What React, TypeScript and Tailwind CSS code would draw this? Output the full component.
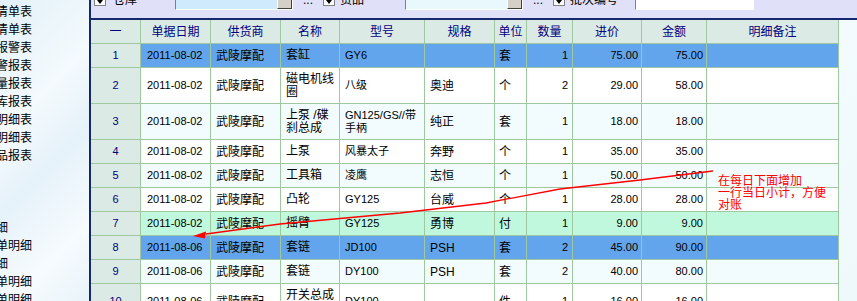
import clsx from "clsx";

const COLS =
  "grid grid-cols-[49px_69px_69px_58px_84px_69px_31px_45px_68px_64px_131px] gap-px";

type Tone = "sel" | "alt" | "white" | "green";

type Row = {
  no: number;
  date: string;
  sup: string;
  name: string[];
  model: string[];
  spec: string;
  unit: string;
  qty: string;
  price: string;
  amt: string;
  tone: Tone;
  mark?: boolean;
};

const toneBg: Record<Tone, string> = {
  sel: "bg-[#63a5ec]",
  alt: "bg-[#f2fcfe]",
  white: "bg-white",
  green: "bg-[#bff8dc]",
};

const rows: Row[] = [
  { no: 1, date: "2011-08-02", sup: "武陵摩配", name: ["套缸"], model: ["GY6"], spec: "", unit: "套", qty: "1", price: "75.00", amt: "75.00", tone: "sel" },
  { no: 2, date: "2011-08-02", sup: "武陵摩配", name: ["磁电机线", "圈"], model: ["八级"], spec: "奥迪", unit: "个", qty: "2", price: "29.00", amt: "58.00", tone: "white" },
  { no: 3, date: "2011-08-02", sup: "武陵摩配", name: ["上泵 /碟", "刹总成"], model: ["GN125/GS//带", "手柄"], spec: "纯正", unit: "套", qty: "1", price: "18.00", amt: "18.00", tone: "alt" },
  { no: 4, date: "2011-08-02", sup: "武陵摩配", name: ["上泵"], model: ["风暴太子"], spec: "奔野", unit: "个", qty: "1", price: "35.00", amt: "35.00", tone: "white" },
  { no: 5, date: "2011-08-02", sup: "武陵摩配", name: ["工具箱"], model: ["凌鹰"], spec: "志恒", unit: "个", qty: "1", price: "50.00", amt: "50.00", tone: "alt" },
  { no: 6, date: "2011-08-02", sup: "武陵摩配", name: ["凸轮"], model: ["GY125"], spec: "台威", unit: "个", qty: "1", price: "28.00", amt: "28.00", tone: "white" },
  { no: 7, date: "2011-08-02", sup: "武陵摩配", name: ["摇臂"], model: ["GY125"], spec: "勇博", unit: "付", qty: "1", price: "9.00", amt: "9.00", tone: "green", mark: true },
  { no: 8, date: "2011-08-06", sup: "武陵摩配", name: ["套链"], model: ["JD100"], spec: "PSH", unit: "套", qty: "2", price: "45.00", amt: "90.00", tone: "sel" },
  { no: 9, date: "2011-08-06", sup: "武陵摩配", name: ["套链"], model: ["DY100"], spec: "PSH", unit: "套", qty: "2", price: "40.00", amt: "80.00", tone: "alt" },
  { no: 10, date: "2011-08-06", sup: "武陵摩配", name: ["开关总成", "左"], model: ["DY100"], spec: "", unit: "件", qty: "1", price: "16.00", amt: "16.00", tone: "white" },
];

const headers = ["一", "单据日期", "供货商", "名称", "型号", "规格", "单位", "数量", "进价", "金额", "明细备注"];

// sidebar entries: [text, visible right edge]
const side: ([string, number] | null)[] = [
  ["清单表", 32],
  ["清单表", 32],
  ["报警表", 32],
  ["警报表", 32],
  ["量报表", 32],
  ["库报表", 32],
  ["明细表", 32],
  ["明细表", 32],
  ["品报表", 32],
  null,
  null,
  null,
  ["细", 8],
  ["单明细", 32],
  ["细", 8],
  ["单明细", 32],
  ["单明细", 32],
];

function Lines({ lines }: { lines: string[] }) {
  return (
    <div className="leading-[13px]">
      {lines.map((l) => (
        <div key={l}>{l}</div>
      ))}
    </div>
  );
}

function Check() {
  return (
    <span className="flex h-[12px] w-[12px] shrink-0 items-end justify-center border border-[#808080] bg-white">
      <span className="mb-[1px] h-0 w-0 border-x-[3px] border-t-[4px] border-x-transparent border-t-black" />
    </span>
  );
}

function Combo({ bg, width, button }: { bg: string; width: string; button: boolean }) {
  return (
    <span
      className={clsx(
        "flex h-[20px] shrink-0 border border-b-white border-l-[#808080] border-r-white border-t-[#808080]",
        bg,
        width,
      )}
    >
      <span className="flex-1" />
      {button ? <span className="w-[15px] border border-b-[#404040] border-l-white border-r-[#404040] border-t-white bg-[#d4d0c8]" /> : null}
    </span>
  );
}

function Toolbar() {
  return (
    <div className="h-[18px] shrink-0 overflow-hidden bg-[#e0e0f8]">
      <div className="-mt-[10px] flex h-[20px] items-center text-[12px] text-black">
        <span className="ml-[3px]">
          <Check />
        </span>
        <span className="ml-[7px] w-[24px] shrink-0 whitespace-nowrap">仓库</span>
        <span className="ml-[38px]">
          <Combo bg="bg-[#cfeafc]" width="w-[118px]" button />
        </span>
        <span className="ml-[10px] w-[10px] shrink-0 leading-none">...</span>
        <span className="ml-[10px]">
          <Check />
        </span>
        <span className="ml-[5px] w-[24px] shrink-0 whitespace-nowrap">货品</span>
        <span className="ml-[41px]">
          <Combo bg="bg-[#e8f8fc]" width="w-[118px]" button />
        </span>
        <span className="ml-[10px] w-[10px] shrink-0 leading-none">...</span>
        <span className="ml-[10px]">
          <Check />
        </span>
        <span className="ml-[5px] w-[48px] shrink-0 whitespace-nowrap">批次编号</span>
        <span className="ml-[17px]">
          <Combo bg="bg-white" width="w-[119px]" button={false} />
        </span>
      </div>
    </div>
  );
}

function Grid() {
  return (
    <div className="flex w-fit flex-col gap-px border-r border-[#a0c8a0] bg-[#a0c8a0]">
      <div className={COLS}>
        {headers.map((h) => (
          <div key={h} className="flex h-[23px] items-center justify-center bg-[#dceae5] text-[12px] text-[#000080]">
            {h}
          </div>
        ))}
      </div>
      {rows.map((r) => {
        const tall = r.name.length > 1 || r.model.length > 1;
        const bg = toneBg[r.tone];
        const cell = clsx("flex items-center overflow-hidden whitespace-nowrap text-black", tall ? "h-[35px]" : "h-[23px]", bg);
        return (
          <div key={r.no} className={COLS}>
            <div className={clsx("flex items-center justify-center bg-[#dceae5] text-[11px] text-[#000080]", tall ? "h-[35px]" : "h-[23px]")}>
              {r.no}
            </div>
            <div className={clsx(cell, "pl-[6px] text-[11px]")}>{r.date}</div>
            <div className={clsx(cell, "pl-[5px] text-[12px]")}>{r.sup}</div>
            <div className={clsx(cell, "pl-[5px] text-[12px]")}>
              <Lines lines={r.name} />
            </div>
            <div className={clsx(cell, "pl-[5px] text-[11px]")}>
              <Lines lines={r.model} />
            </div>
            <div className={clsx(cell, "pl-[5px] text-[12px]")}>{r.spec}</div>
            <div className={clsx(cell, "pl-[4px] text-[12px]")}>{r.unit}</div>
            <div className={clsx(cell, "justify-end pr-[4px] text-[11px]")}>{r.qty}</div>
            <div className={clsx(cell, "justify-end pr-[3px] text-[11px]")}>{r.price}</div>
            <div className={clsx(cell, "justify-end pr-[3px] text-[11px]")}>{r.amt}</div>
            <div className={clsx(cell, r.mark ? "bg-[#5563ee]" : "")} />
          </div>
        );
      })}
    </div>
  );
}

export default function App() {
  return (
    <div className="relative flex h-[301px] w-[857px] overflow-hidden bg-white font-['Liberation_Sans','Noto_Sans_CJK_SC',sans-serif]">
      <aside className="w-[89px] shrink-0 bg-[linear-gradient(135deg,#e2f1f8_0%,#f4fafd_35%,#e5f2f9_55%,#f6fbfe_80%,#e8f4fa_100%)] pt-[3px] text-[12px] text-black">
        {side.map((s, i) => (
          <div key={i} className="flex h-[18px] items-center">
            {s ? (
              <div className={clsx("flex justify-end overflow-hidden whitespace-nowrap", s[1] === 32 ? "w-[32px]" : "w-[8px]")}>
                <span className="shrink-0">{s[0]}</span>
              </div>
            ) : null}
          </div>
        ))}
      </aside>
      <div className="w-[2px] shrink-0 bg-[#14286e]" />
      <main className="flex min-w-0 flex-1 flex-col">
        <Toolbar />
        <div className="h-[2px] shrink-0 bg-[#14286e]" />
        <div className="min-h-0 flex-1 overflow-hidden bg-[linear-gradient(135deg,#eef9fc_0%,#f6fcfe_50%,#eef9fc_100%)]">
          <Grid />
        </div>
      </main>

      <svg className="pointer-events-none absolute left-0 top-0" width={857} height={301}>
        <polyline
          points="713,171 640,180 560,189 486,203 400,213 280,224 206,234"
          fill="none"
          stroke="#ff0000"
          strokeWidth={1.3}
        />
        <polygon points="193,236 206,231.5 205,238.5" fill="#ff0000" />
      </svg>
      <div className="pointer-events-none absolute left-[718px] top-[175px] text-[12px] leading-[12px] text-[#ff0000]">
        <div>在每日下面增加</div>
        <div>一行当日小计，方便</div>
        <div>对账</div>
      </div>
    </div>
  );
}
